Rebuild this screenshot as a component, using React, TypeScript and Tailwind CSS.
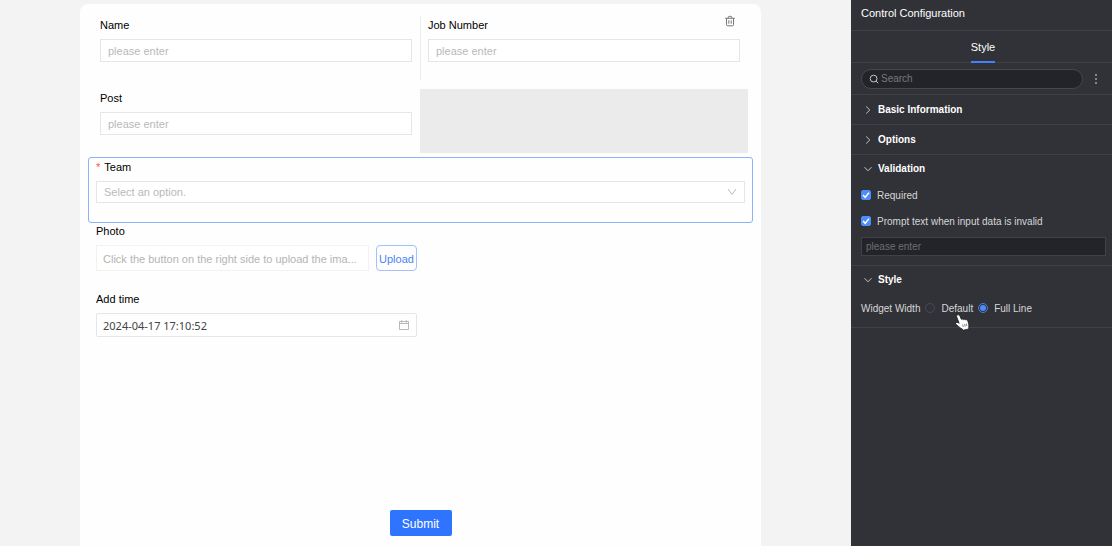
import { useState } from 'react'
import type { ReactNode } from 'react'

const fieldClass =
  'block w-full border border-[#e6e6e6] bg-white px-[7px] text-[11px] outline-none placeholder:text-[#b9b9b9]'

function TextField({ id, label }: { id: string; label: string }) {
  return (
    <div className="h-16 min-w-0 flex-1 px-2">
      <label htmlFor={id} className="block pt-px text-[11px] leading-4 text-black">
        {label}
      </label>
      <input
        id={id}
        type="text"
        placeholder="please enter"
        className={`${fieldClass} mt-[6px] h-[23px] text-[#333]`}
      />
    </div>
  )
}

function TrashIcon() {
  return (
    <svg viewBox="0 0 12 12" className="size-3" fill="none" stroke="#777" aria-hidden="true">
      <path d="M1.2 3.3h9.6M3.9 3.2q0-2 2.1-2t2.1 2M2.5 3.4v6.4q0 1 1 1h5q1 0 1-1V3.4M4.8 5.3v3.4M7.2 5.3v3.4" />
    </svg>
  )
}

function CalendarIcon() {
  return (
    <svg viewBox="0 0 12 12" className="size-3" fill="none" stroke="#b8b8b8" aria-hidden="true">
      <path d="M1.5 2.5h9v8h-9zM1 4.5h10M3.8 1v2.6M8.4 1v2.6" />
    </svg>
  )
}

function Chevron({ open }: { open: boolean }) {
  return (
    <svg viewBox="0 0 10 10" className="size-[10px] shrink-0" fill="none" stroke="#c4c4c6" aria-hidden="true">
      <path d={open ? 'M1.5 3.2 5 6.8 8.5 3.2' : 'M3.2 1.5 6.8 5 3.2 8.5'} />
    </svg>
  )
}

function HandCursor() {
  return (
    <svg
      viewBox="0 0 15 17"
      className="pointer-events-none absolute top-[13px] left-[30px] z-10 h-[17px] w-[15px]"
      aria-hidden="true"
    >
      <path
        d="M2.4 1c1-.5 2 0 2.4.9l1.6 3.5c.7-.6 1.6-.4 2.1.3.7-.6 1.6-.4 2.1.3.9-.5 1.9 0 2.2.9l.9 3.2c.4 1.4-.1 2.4 0 3.6v1.2l-5.8 1.400-.6-1.300c-1.400-.6-2.600-1.500-3.700-2.600C2.700 11.500 1.600 11 .9 10.300c-.7-.9 0-2.100 1.200-1.900.8.1 1.500.5 2.100.9L1.800 3C1.400 2.100 1.600 1.400 2.400 1z"
        fill="#fff"
        stroke="#111"
        strokeWidth="0.7"
      />
      <path
        d="M7.700 10.400l.6 2.500M9.600 10l.6 2.500M11.400 9.600l.5 2.500"
        fill="none"
        stroke="#333"
        strokeWidth="0.6"
      />
    </svg>
  )
}

function FormPreview() {
  return (
    <main className="mt-1 mr-[90px] ml-20 flex min-w-0 flex-1 flex-col rounded-t-lg bg-[#fefefe] px-2 pt-3">
      <div className="grid grid-cols-2 gap-y-[9px] pr-[5px] pl-1">
        <TextField id="name" label="Name" />
        <div className="relative">
          <div className="absolute inset-y-0 left-0 w-px bg-[#ededed]" />
          <TextField id="job-number" label="Job Number" />
          <button type="button" aria-label="Delete" className="absolute -top-px right-3">
            <TrashIcon />
          </button>
        </div>
        <TextField id="post" label="Post" />
        <div className="h-16 bg-[#ebebeb]" />
      </div>

      <div className="mt-1 h-[66px] rounded-[3px] border border-[#8cb1fb] px-[7px]">
        <label htmlFor="team" className="flex gap-1 pt-px text-[11px] leading-4 text-black">
          <span className="text-[#f5564e]">*</span>Team
        </label>
        <div className="relative mt-[6px]">
          <select id="team" defaultValue="" className={`${fieldClass} h-[22px] appearance-none text-[#b9b9b9]`}>
            <option value="">Select an option.</option>
          </select>
          <svg
            viewBox="0 0 10 10"
            className="pointer-events-none absolute top-[6px] right-2 size-[10px]"
            fill="none"
            stroke="#bdbdbd"
            aria-hidden="true"
          >
            <path d="M1 2l4 5.4L9 2" />
          </svg>
        </div>
      </div>

      <div className="w-[337px] px-2">
        <label htmlFor="photo" className="block text-[11px] leading-4 text-black">
          Photo
        </label>
        <div className="mt-[6px] flex gap-[7px]">
          <input
            id="photo"
            type="text"
            readOnly
            placeholder="Click the button on the right side to upload the ima..."
            className="h-[26px] min-w-0 flex-1 border border-[#f2f2f2] bg-white pt-px pl-[6px] text-[11px] outline-none placeholder:text-[#b4b4b4]"
          />
          <button
            type="button"
            className="h-[26px] w-[41px] shrink-0 rounded-[4px] border border-[#a3c1fb] pt-[2px] text-[11px] text-[#4a83f5]"
          >
            Upload
          </button>
        </div>

        <label htmlFor="add-time" className="mt-5 block text-[11px] leading-4 text-black">
          Add time
        </label>
        <div className="mt-[6px] flex h-6 items-center rounded-[2px] border border-[#e6e6e6] bg-white px-[6px]">
          <input
            id="add-time"
            type="text"
            defaultValue="2024-04-17 17:10:52"
            className="min-w-0 flex-1 pt-[2px] font-['Noto_Sans',sans-serif] text-[11px] text-[#444] outline-none"
          />
          <CalendarIcon />
        </div>
      </div>

      <div className="mt-auto flex justify-center pt-6 pb-[10px]">
        <button type="button" className="h-[26px] w-[62px] rounded-[2px] bg-[#2f74ff] pt-px text-[12px] text-white">
          Submit
        </button>
      </div>
    </main>
  )
}

function Section({
  title,
  initialOpen = false,
  children,
}: {
  title: string
  initialOpen?: boolean
  children?: ReactNode
}) {
  const [open, setOpen] = useState(initialOpen)

  return (
    <section className="border-b border-[#404146]">
      <button
        type="button"
        aria-expanded={open}
        onClick={() => setOpen(!open)}
        className={`flex w-full items-center gap-[5px] px-3 text-[10px] font-bold text-white ${open ? 'h-[27px]' : 'h-[29px]'}`}
      >
        <Chevron open={open} />
        {title}
      </button>
      {open ? children : null}
    </section>
  )
}

function CheckOption({ label }: { label: string }) {
  return (
    <label className="flex h-[26px] items-center gap-[6px]">
      <span className="relative block size-[10px]">
        <input
          type="checkbox"
          defaultChecked
          className="peer block size-[10px] appearance-none rounded-[2px] border border-[#55565b] checked:border-[#4d8dfa] checked:bg-[#4d8dfa]"
        />
        <svg
          viewBox="0 0 10 10"
          className="pointer-events-none absolute inset-0 hidden size-[10px] peer-checked:block"
          fill="none"
          stroke="#fff"
          strokeWidth="1.5"
          aria-hidden="true"
        >
          <path d="M2 5l2.2 2.3L8 2.6" />
        </svg>
      </span>
      {label}
    </label>
  )
}

function WidthOption({ label, checked = false }: { label: string; checked?: boolean }) {
  return (
    <label className="flex items-center gap-[6px]">
      <input
        type="radio"
        name="widget-width"
        defaultChecked={checked}
        className="flex size-[10px] appearance-none items-center justify-center rounded-full border border-[#4a4b50] before:size-[6px] before:rounded-full checked:border-[#4a7fdc] checked:before:bg-[#4d8dfa]"
      />
      {label}
    </label>
  )
}

function ConfigPanel() {
  return (
    <aside className="w-[261px] shrink-0 bg-[#313237] text-[10px] text-[#d6d6d8]">
      <h1 className="h-[31px] border-b border-[#404146] px-[10px] pt-[5px] text-[11px] leading-4 text-white">
        Control Configuration
      </h1>
      <div role="tablist" className="flex h-8 justify-center border-b border-[#404146] pl-[3px]">
        <button
          type="button"
          role="tab"
          aria-selected="true"
          className="-mb-px border-b-2 border-[#4480ff] pt-[3px] text-[11px] text-white"
        >
          Style
        </button>
      </div>
      <div className="flex h-8 items-center border-b border-[#404146] pl-[10px]">
        <label className="flex h-5 flex-1 items-center gap-[2px] rounded-full border border-[#47484d] bg-[#232429] px-[7px]">
          <svg viewBox="0 0 10 10" className="size-[10px]" fill="none" stroke="#c4c4c6" aria-hidden="true">
            <circle cx="4.6" cy="4.6" r="3.4" />
            <path d="M7 7l2.2 2.2" />
          </svg>
          <input
            type="search"
            aria-label="Search"
            placeholder="Search"
            className="min-w-0 flex-1 outline-none placeholder:text-[#77787c]"
          />
        </label>
        <button type="button" aria-label="More" className="mr-[11px] ml-2 text-[#b0b0b3]">
          <svg viewBox="0 0 10 12" className="h-3 w-[10px]" fill="currentColor" aria-hidden="true">
            <circle cx="5" cy="2" r="0.9" />
            <circle cx="5" cy="6" r="0.9" />
            <circle cx="5" cy="10" r="0.9" />
          </svg>
        </button>
      </div>

      <Section title="Basic Information" />
      <Section title="Options" />
      <Section title="Validation" initialOpen>
        <div className="pr-[6px] pb-[9px] pl-[10px]">
          <CheckOption label="Required" />
          <CheckOption label="Prompt text when input data is invalid" />
          <input
            type="text"
            aria-label="Prompt text"
            placeholder="please enter"
            className="mt-[3px] block h-[19px] w-full border border-[#404146] bg-[#232429] px-1 outline-none placeholder:text-[#6d6e72]"
          />
        </div>
      </Section>
      <Section title="Style" initialOpen>
        <div role="radiogroup" aria-labelledby="widget-width" className="flex h-[34px] items-center px-[10px] pb-1">
          <span id="widget-width" className="mr-[5px]">
            Widget Width
          </span>
          <div className="relative mr-[5px]">
            <WidthOption label="Default" />
            <HandCursor />
          </div>
          <WidthOption label="Full Line" checked />
        </div>
      </Section>
    </aside>
  )
}

export default function App() {
  return (
    <div className="flex min-h-screen bg-[#f3f3f3] font-['Liberation_Sans',Arial,sans-serif]">
      <FormPreview />
      <ConfigPanel />
    </div>
  )
}
